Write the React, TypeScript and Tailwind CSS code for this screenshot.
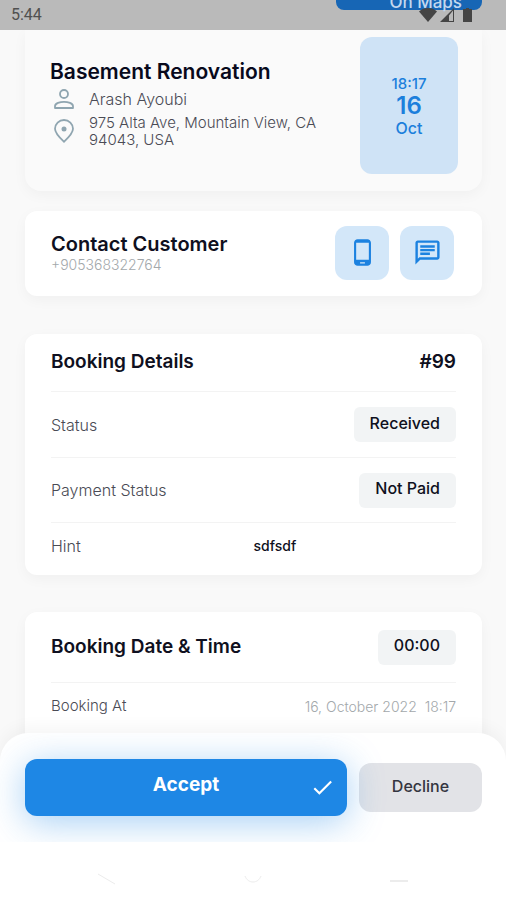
import type { ReactNode } from "react";
import { MdCheck, MdOutlineChat, MdPhoneAndroid } from "react-icons/md";

const PersonIcon = () => (
  <svg viewBox="0 0 20 20" className="size-5 shrink-0" fill="none" stroke="#8fa5b0" strokeWidth="1.8">
    <circle cx="10" cy="5" r="4" />
    <path d="M1 19v-1.8c0-2.8 5-4.4 9-4.4s9 1.600 9 4.400V19z" strokeLinejoin="round" />
  </svg>
);

const PinIcon = () => (
  <svg viewBox="0 0 20 24" className="h-6 w-5 shrink-0" fill="none" stroke="#8fa5b0" strokeWidth="1.8">
    <path d="M10 22.8C6.500 19.500 1 14.500 1 9.800a9 8.800 0 0 1 18 0c0 4.700-5.500 9.700-9 13z" strokeLinejoin="round" />
    <circle cx="10" cy="10" r="2.500" fill="#8fa5b0" stroke="none" />
  </svg>
);

const StatusIcons = () => (
  <svg viewBox="0 0 54 16" className="h-4 w-[54px]" fill="#454545">
    <path d="M0 4.500C2.500 2 5.500 1 9 1s6.500 1 9 3.500L9 15z" />
    <path d="M35 1v14H21zM30 8.500V14h4V3.500z" fillRule="evenodd" />
    <path d="M47 1h3v1h3v13h-9V2h3z" />
  </svg>
);

const Badge = ({ children }: { children: ReactNode }) => (
  <span className="flex h-[35px] items-center rounded-md bg-[#f2f4f5] px-4 pb-1 text-base font-medium">
    {children}
  </span>
);

const App = () => {
  return (
    <div className="flex h-screen flex-col overflow-hidden bg-[#f9f9f9] font-['Inter',sans-serif] text-[#0f1020]">
      {/* STATUS BAR */}
      <header className="relative flex h-[30px] shrink-0 items-center justify-between overflow-hidden bg-[#bababa] pl-[11px] pr-[33px]">
        <button className="absolute right-6 bottom-5 flex h-12 w-[146px] items-end justify-end rounded-lg bg-[#1766b5] pr-5 text-[17px] leading-4 font-medium text-[#c3d8ee]">
          On Maps
        </button>
        <span className="font-['Roboto',sans-serif] text-base leading-5 text-[#505050]">5:44</span>
        <span className="relative">
          <StatusIcons />
        </span>
      </header>

      <main className="flex min-h-0 flex-1 flex-col overflow-hidden pr-6 pl-[25px]">
        {/* JOB */}
        <section className="flex h-[161px] shrink-0 items-start justify-between rounded-b-2xl bg-[#fafafa] pt-[7px] pr-6 pl-[25px] shadow-[0_4px_14px_rgba(0,0,0,0.04)]">
          <div className="min-w-0 flex-1 pt-[23px]">
            <h1 className="text-[21px] leading-6 font-semibold whitespace-nowrap text-[#08091c]">Basement Renovation</h1>
            <div className="mt-[5px] flex items-center gap-[15px] pl-1 text-base leading-5 font-light text-[#4a4b55]">
              <PersonIcon />
              <p>Arash Ayoubi</p>
            </div>
            <div className="mt-[5px] flex items-center gap-[15px] pl-1 text-[15px] leading-[17px] font-light text-[#4a4b55]">
              <PinIcon />
              <p>
                975 Alta Ave, Mountain View, CA
                <br />
                94043, USA
              </p>
            </div>
          </div>
          <div className="flex h-[137px] w-[98px] shrink-0 flex-col items-center justify-center rounded-xl bg-[#cfe3f6] text-[#1c7fdc]">
            <span className="text-[15px] leading-5 font-medium">18:17</span>
            <span className="text-2xl leading-6 font-semibold">16</span>
            <span className="text-base leading-5 font-medium">Oct</span>
          </div>
        </section>

        {/* CONTACT */}
        <section className="mt-5 flex h-[85px] shrink-0 items-center justify-between rounded-xl bg-white pr-7 pb-0.5 pl-[26px] shadow-[0_4px_14px_rgba(0,0,0,0.04)]">
          <div>
            <h2 className="text-xl leading-6 font-semibold">Contact Customer</h2>
            <p className="text-sm leading-[18px] font-light text-[#a3a8ab]">+905368322764</p>
          </div>
          <div className="flex gap-[11px] text-[#1c82e0]">
            <button aria-label="Call" className="flex size-[54px] items-center justify-center rounded-xl bg-[#d3e7f9]">
              <MdPhoneAndroid size={29} />
            </button>
            <button aria-label="Chat" className="flex size-[54px] items-center justify-center rounded-xl bg-[#d3e7f9]">
              <MdOutlineChat size={29} />
            </button>
          </div>
        </section>

        {/* BOOKING DETAILS */}
        <section className="mt-[38px] shrink-0 rounded-xl bg-white px-[26px] shadow-[0_4px_14px_rgba(0,0,0,0.04)]">
          <div className="flex h-[57px] items-center justify-between text-[19px] font-semibold">
            <h2>Booking Details</h2>
            <span>#99</span>
          </div>
          <div className="flex h-[66px] items-center justify-between border-t border-[#f3f3f3]">
            <span className="text-base font-light text-[#4a4b55]">Status</span>
            <Badge>Received</Badge>
          </div>
          <div className="flex h-[65px] items-center justify-between border-t border-[#f3f3f3]">
            <span className="text-base font-light text-[#4a4b55]">Payment Status</span>
            <Badge>Not Paid</Badge>
          </div>
          <div className="grid h-[53px] grid-cols-2 items-center border-t border-[#f3f3f3] pb-1.5">
            <span className="text-base font-light text-[#4a4b55]">Hint</span>
            <span className="text-sm font-medium">sdfsdf</span>
          </div>
        </section>

        {/* BOOKING DATE */}
        <section className="mt-[37px] shrink-0 rounded-xl bg-white px-[26px] pb-12 shadow-[0_4px_14px_rgba(0,0,0,0.04)]">
          <div className="flex h-[70px] items-center justify-between">
            <h2 className="text-[19px] font-semibold">Booking Date &amp; Time</h2>
            <Badge>00:00</Badge>
          </div>
          <div className="flex h-12 items-center justify-between border-t border-[#f3f3f3] font-light">
            <span className="text-[15px] text-[#4a4b55]">Booking At</span>
            <span className="text-sm whitespace-pre text-[#a3a8ab]">{"16, October 2022  18:17"}</span>
          </div>
        </section>
      </main>

      {/* ACTIONS */}
      <footer className="relative -mt-7 shrink-0 rounded-t-[28px] bg-white shadow-[0_-6px_16px_rgba(0,0,0,0.04)]">
        <div className="flex h-[109px] items-center gap-3 overflow-hidden rounded-t-[28px] pr-6 pl-[25px]">
          <button className="relative h-[57px] flex-1 rounded-xl bg-[#1e87e5] pb-1 text-[19px] font-bold text-white shadow-[0_6px_36px_rgba(30,135,229,0.4)]">
            Accept
            <MdCheck size={25} className="absolute top-4 right-3" />
          </button>
          <button className="h-[49px] w-[123px] rounded-xl bg-[#e2e3e7] pb-1 text-base font-medium text-[#343540]">
            Decline
          </button>
        </div>
        <nav className="flex h-[58px] items-center justify-around bg-white px-[34px] pt-4">
          <svg viewBox="0 0 20 12" className="h-3 w-5" fill="none" stroke="#ececec">
            <path d="M1 1l17 10" />
          </svg>
          <svg viewBox="0 0 20 12" className="h-3 w-5" fill="none" stroke="#ececec">
            <path d="M2 3c3 8 13 8 16 0" />
          </svg>
          <svg viewBox="0 0 20 12" className="h-3 w-5" fill="none" stroke="#ececec" strokeWidth="2">
            <path d="M1 8h18" />
          </svg>
        </nav>
      </footer>
    </div>
  );
};

export default App;
